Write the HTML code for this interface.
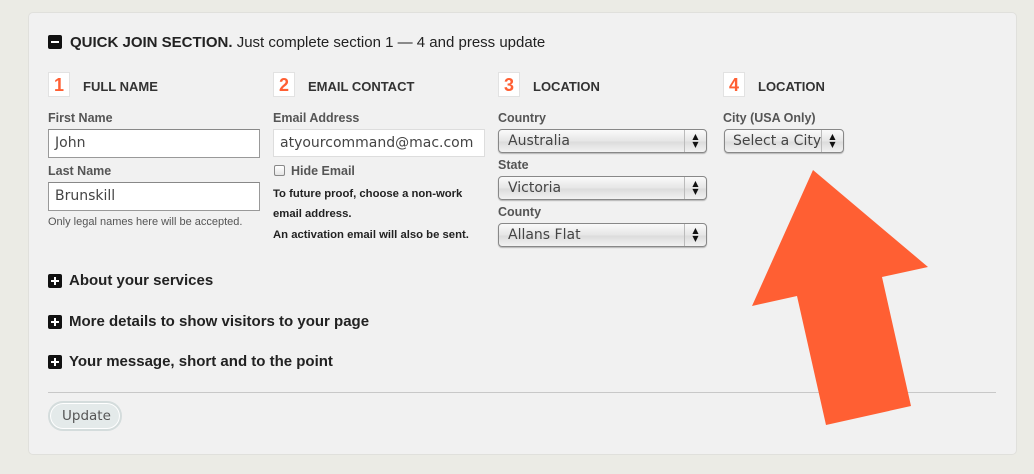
<!DOCTYPE html>
<html><head><style>
*{margin:0;padding:0;box-sizing:border-box}
body{width:1034px;height:474px;background:#ebebe5;font-family:"Liberation Sans",Arial,sans-serif;position:relative;overflow:hidden;color:#333}
.panel{position:absolute;left:28px;top:12px;width:989px;height:443px;background:#f1f1f1;border:1px solid #e0e0dc;border-radius:5px}
.a{position:absolute;white-space:nowrap}
.ico{position:absolute;width:14px;height:14px;background:#111;border-radius:2px}
.ico:before{content:"";position:absolute;left:3px;top:6px;width:8px;height:2px;background:#fff}
.ico.p:after{content:"";position:absolute;left:6px;top:3px;width:2px;height:8px;background:#fff}
.num{position:absolute;width:22px;height:25px;background:#fff;border:1px solid #e2e2e2;color:#ff5f33;font-size:18px;font-weight:bold;text-align:center;line-height:24px}
.h{font-weight:bold;font-size:13px;color:#333}
.lbl{font-weight:bold;font-size:12.5px;color:#555}
.inp{position:absolute;background:#fff;border:1px solid #999;border-top-color:#888;font-family:"DejaVu Sans",sans-serif;font-size:14px;color:#444;padding-left:6px;line-height:27px}
.sel{position:absolute;height:24px;border:1px solid #888;border-radius:4px;background:linear-gradient(#fafafa,#e6e6e6 50%,#dcdcdc 55%,#f2f2f2);box-shadow:0 1px 1px rgba(0,0,0,.25);font-family:"DejaVu Sans",sans-serif;font-size:14px;color:#444;padding-left:9px;line-height:23px}
.sel i{position:absolute;right:0;top:0;width:22px;height:22px;border-left:1px solid #bbb;font-style:normal;font-size:8px;text-align:center;line-height:8px;padding-top:3px;color:#111}
.sm{font-size:11.3px;font-weight:bold;color:#222}
.plus{font-weight:bold;font-size:15px;color:#222}
</style></head><body>
<div class="panel"></div>
<div class="ico" style="left:48px;top:35px"></div>
<div class="a" style="left:70px;top:34px;font-size:15px;color:#222"><b>QUICK JOIN SECTION.</b> Just complete section 1 — 4 and press update</div>

<div class="num" style="left:48px;top:72px">1</div><div class="a h" style="left:83px;top:79px">FULL NAME</div>
<div class="num" style="left:273px;top:72px">2</div><div class="a h" style="left:308px;top:79px">EMAIL CONTACT</div>
<div class="num" style="left:498px;top:72px">3</div><div class="a h" style="left:533px;top:79px">LOCATION</div>
<div class="num" style="left:723px;top:72px">4</div><div class="a h" style="left:758px;top:79px">LOCATION</div>

<div class="a lbl" style="left:48px;top:111px">First Name</div>
<div class="inp" style="left:48px;top:129px;width:212px;height:29px">John</div>
<div class="a lbl" style="left:48px;top:164px">Last Name</div>
<div class="inp" style="left:48px;top:182px;width:212px;height:29px">Brunskill</div>
<div class="a" style="left:48px;top:216px;font-size:11px;color:#555">Only legal names here will be accepted.</div>

<div class="a lbl" style="left:273px;top:111px">Email Address</div>
<div class="inp" style="left:273px;top:129px;width:212px;height:28px;border-color:#ddd">atyourcommand@mac.com</div>
<div class="a" style="left:274px;top:165px;width:11px;height:11px;border:1px solid #888;border-radius:2px;background:linear-gradient(#fff,#e4e4e4)"></div>
<div class="a lbl" style="left:291px;top:164px">Hide Email</div>
<div class="a sm" style="left:273px;top:188px">To future proof, choose a non-work</div>
<div class="a sm" style="left:273px;top:208px">email address.</div>
<div class="a sm" style="left:273px;top:229px">An activation email will also be sent.</div>

<div class="a lbl" style="left:498px;top:111px">Country</div>
<div class="sel" style="left:498px;top:129px;width:209px">Australia<i>▲<br>▼</i></div>
<div class="a lbl" style="left:498px;top:158px">State</div>
<div class="sel" style="left:498px;top:176px;width:209px">Victoria<i>▲<br>▼</i></div>
<div class="a lbl" style="left:498px;top:205px">County</div>
<div class="sel" style="left:498px;top:223px;width:209px">Allans Flat<i>▲<br>▼</i></div>

<div class="a lbl" style="left:723px;top:111px">City (USA Only)</div>
<div class="sel" style="left:724px;top:129px;width:120px;padding-left:8px">Select a City<i>▲<br>▼</i></div>

<div class="ico p" style="left:48px;top:274px"></div><div class="a plus" style="left:69px;top:272px">About your services</div>
<div class="ico p" style="left:48px;top:315px"></div><div class="a plus" style="left:69px;top:313px">More details to show visitors to your page</div>
<div class="ico p" style="left:48px;top:355px"></div><div class="a plus" style="left:69px;top:353px">Your message, short and to the point</div>

<div class="a" style="left:48px;top:392px;width:948px;height:1px;background:#c8c8c8"></div>
<div class="a" style="left:48px;top:401px;width:74px;height:30px;border-radius:15px;background:#e4eaea;border:2px solid #d4dcdc;box-shadow:inset 0 0 0 1px #fff"></div>
<div class="a" style="left:62px;top:408px;font-family:'DejaVu Sans',sans-serif;font-size:13.5px;color:#555">Update</div>

<svg class="a" style="left:0;top:0" width="1034" height="474"><polygon points="813,170 928,267 882,277 911,406 826,425 797,296 752,306" fill="#ff5f33"/></svg>
</body></html>
